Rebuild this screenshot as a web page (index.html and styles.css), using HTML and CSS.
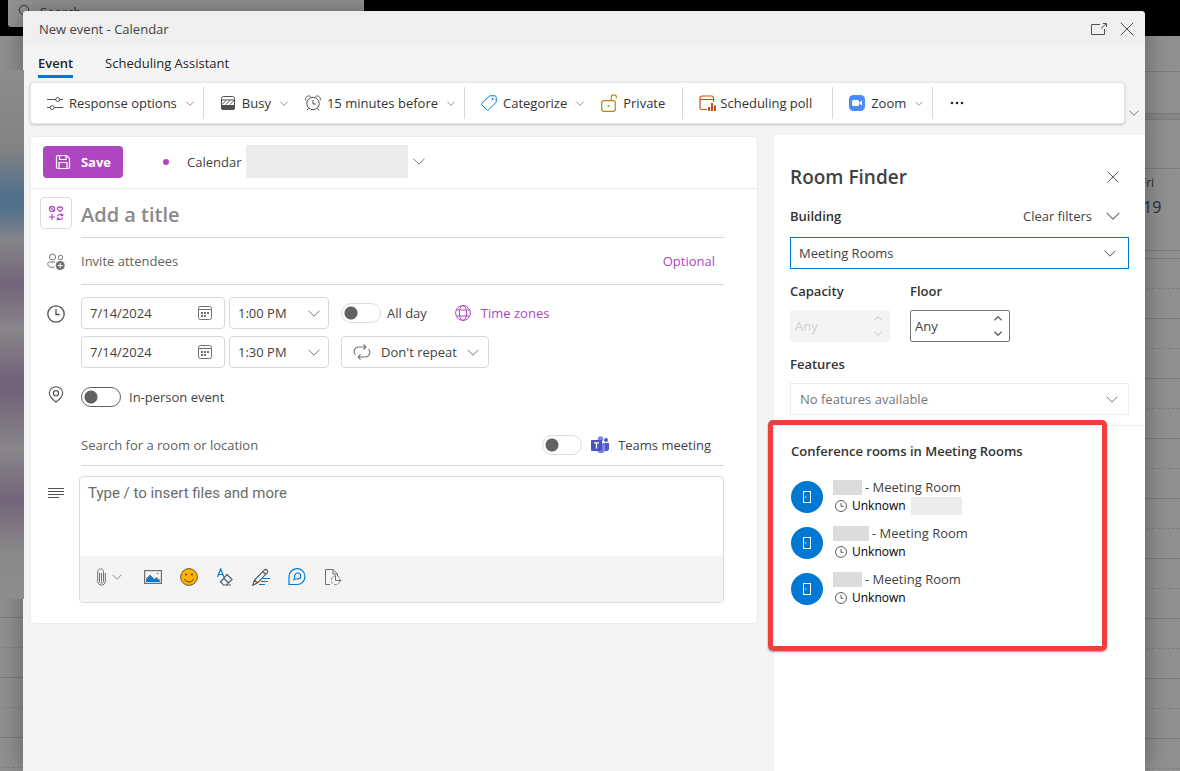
FILE: index.html
```html
<!DOCTYPE html>
<html lang="en">
<head>
    <meta charset="UTF-8">
    <meta name="viewport" content="width=device-width, initial-scale=1.0">
    <title>New event - Calendar</title>
    <link rel="stylesheet" href="styles.css">
</head>
<body>

    <svg class="sprite" aria-hidden="true">
        <symbol id="chevron" viewBox="0 0 12 7"><path d="M.5.7 6 6.2 11.5.7" fill="none" stroke="currentColor"/></symbol>
        <symbol id="close" viewBox="0 0 14 14"><path d="M.7.7l12.6 12.6M13.3.7.7 13.3" fill="none" stroke="currentColor"/></symbol>
        <symbol id="calendar" viewBox="0 0 16 16">
            <rect x="1.5" y="1.5" width="13" height="13" rx="2" fill="none" stroke="currentColor"/>
            <path d="M1.5 4.5h13" stroke="currentColor"/>
            <path d="M4 7h2v2H4zM7 7h2v2H7zM10 7h2v2h-2zM4 10h2v2H4zM7 10h2v2H7z" fill="currentColor"/>
        </symbol>
        <symbol id="clock" viewBox="0 0 18 18">
            <circle cx="9" cy="9" r="8.2" fill="none" stroke="currentColor" stroke-width="1.3"/>
            <path d="M9 4.3V9.500h3.700" fill="none" stroke="currentColor" stroke-width="1.3"/>
        </symbol>
        <symbol id="door" viewBox="0 0 10 14">
            <rect x="1.500" y="1.500" width="7" height="11" fill="none" stroke="currentColor"/>
            <path d="M3 7h1.300" stroke="currentColor"/>
        </symbol>
    </svg>

    <!-- calendar behind the dialog -->
    <div class="backdrop">
        <div class="topbar">
            <div class="search">
                <svg width="14" height="14" viewBox="0 0 14 14"><circle cx="6" cy="6" r="4.700" fill="none" stroke="currentColor"/><path d="M9.500 9.500 13 13" stroke="currentColor"/></svg>
                <span>Search</span>
            </div>
        </div>
        <div class="week">
            <div class="side">
                <div class="sidebar"></div>
                <div class="side-hours"></div>
            </div>
            <div class="day">
                <div class="day-bar"></div>
                <div class="day-tools"></div>
                <div class="day-gap"></div>
                <div class="day-month"></div>
                <div class="day-head">
                    <span>Fri</span>
                    <b>19</b>
                </div>
                <div class="day-allday"></div>
                <div class="day-hours"></div>
            </div>
        </div>
    </div>

    <div class="dialog" role="dialog" aria-labelledby="dialogTitle">
        <header class="titlebar">
            <span id="dialogTitle">New event - Calendar</span>
            <div class="window-buttons">
                <button type="button" aria-label="Open in new window">
                    <svg width="18" height="14" viewBox="0 0 18 14" fill="none" stroke="currentColor"><path d="M10 2.500H1.500v10h13V7M11 6.500l5.500-5M13 1.500h3.500V5"/></svg>
                </button>
                <button type="button" aria-label="Close"><svg width="14" height="14"><use href="#close"/></svg></button>
            </div>
        </header>

        <nav class="tabs">
            <a href="#event" class="active">Event</a>
            <a href="#assistant">Scheduling Assistant</a>
        </nav>

        <div class="ribbon-row">
            <div class="ribbon">
                <div class="ribbon-group">
                    <button type="button">
                        <svg width="16" height="16" viewBox="0 0 16 16" fill="none" stroke="currentColor"><path d="M0 4.500h8.500M13 4.500h3M0 12.500h3M7.500 12.500H16"/><circle cx="10.700" cy="4.500" r="2"/><circle cx="5.200" cy="12.500" r="2"/></svg>
                        Response options
                        <svg class="more" width="8" height="5"><use href="#chevron"/></svg>
                    </button>
                </div>
                <div class="ribbon-group">
                    <button type="button">
                        <svg width="16" height="16" viewBox="0 0 16 16"><rect x="1.500" y="1.500" width="13" height="13" rx="2" fill="none" stroke="currentColor"/><path d="M1 10h14v3a2 2 0 0 1-2 2H3a2 2 0 0 1-2-2zM1 4.500h14v1H1z" fill="currentColor"/><path d="M2 9.500l4-4M6 9.500l4-4M10 9.500l4-4" stroke="currentColor"/></svg>
                        Busy
                        <svg class="more" width="8" height="5"><use href="#chevron"/></svg>
                    </button>
                    <button type="button">
                        <svg width="16" height="16" viewBox="0 0 16 16" fill="none" stroke="currentColor"><circle cx="8" cy="8.500" r="6.200"/><path d="M8 5v4h3M3.500 13.300 2 15.300M12.500 13.300l1.500 2M.8 5.500C-.2 2.500 2.500-.2 5.500 1.500M15.200 5.500C16.200 2.500 13.500-.2 10.500 1.500"/></svg>
                        15 minutes before
                        <svg class="more" width="8" height="5"><use href="#chevron"/></svg>
                    </button>
                </div>
                <div class="ribbon-group">
                    <button type="button">
                        <svg class="blue" width="16" height="16" viewBox="0 0 16 16" fill="none" stroke="currentColor"><path d="M8.800.8h5c.9 0 1.400.5 1.400 1.400v5L7.600 14.800c-.6.6-1.200.6-1.800 0L1 10c-.6-.6-.6-1.200 0-1.800z"/><path d="M10.800 4h1.700" stroke-width="1.700"/></svg>
                        Categorize
                        <svg class="more" width="8" height="5"><use href="#chevron"/></svg>
                    </button>
                    <button type="button" class="plain">
                        <svg class="gold" width="16" height="18" viewBox="0 0 16 18" fill="none" stroke="currentColor" stroke-width="1.200"><rect x=".7" y="6.600" width="13.600" height="10.700" rx="2"/><path d="M10.200 6.600V3.300c0-3.200 5.200-3.200 5.200 0v1"/><circle cx="7.500" cy="12" r="1" fill="currentColor" stroke="none"/></svg>
                        Private
                    </button>
                </div>
                <div class="ribbon-group">
                    <button type="button" class="poll">
                        <svg class="orange" width="17" height="16" viewBox="0 0 17 16"><path d="M8 14.500H3a2 2 0 0 1-2-2V3a2 2 0 0 1 2-2h9.500a2 2 0 0 1 2 2v4M1 4.500h13.500" fill="none" stroke="currentColor" stroke-width="1.200"/><path d="M9 12h2v4H9zM12 8h2v8h-2zM15 10.500h2V16h-2z" fill="currentColor"/></svg>
                        Scheduling poll
                    </button>
                </div>
                <div class="ribbon-group">
                    <button type="button">
                        <svg width="16" height="16" viewBox="0 0 16 16"><rect width="16" height="16" rx="4.500" fill="#4a8cff"/><rect x="3" y="5" width="7" height="6" rx="1.500" fill="#fff"/><path d="M10.500 7.300 13 5.500v5l-2.500-1.800z" fill="#fff"/></svg>
                        Zoom
                        <svg class="more" width="8" height="5"><use href="#chevron"/></svg>
                    </button>
                </div>
                <div class="ribbon-group">
                    <button type="button" aria-label="More options">
                        <svg width="16" height="16" viewBox="0 0 16 16" fill="#242424"><circle cx="3" cy="8" r="1.300"/><circle cx="8" cy="8" r="1.300"/><circle cx="13" cy="8" r="1.300"/></svg>
                    </button>
                </div>
            </div>
            <button type="button" class="ribbon-toggle" aria-label="Ribbon display options"><svg width="10" height="6"><use href="#chevron"/></svg></button>
        </div>

        <div class="content">
            <form class="card">
                <div class="card-head">
                    <button type="button" class="save">
                        <svg width="16" height="16" viewBox="0 0 16 16" fill="none" stroke="currentColor" stroke-width="1.200"><path d="M3 1.500h8.500l3 3V13a1.500 1.500 0 0 1-1.500 1.500H3A1.500 1.500 0 0 1 1.500 13V3A1.500 1.500 0 0 1 3 1.500z"/><path d="M4.500 1.500v4h6.500v-4M4 14.500v-6h8v6"/></svg>
                        Save
                    </button>
                    <span class="dot"></span>
                    <span class="calendar-name">Calendar</span>
                    <span class="redacted account"></span>
                    <svg class="gray" width="12" height="7"><use href="#chevron"/></svg>
                </div>

                <div class="fields">
                    <button type="button" class="category" aria-label="Charm">
                        <svg width="16" height="16" viewBox="0 0 16 16" fill="none" stroke="currentColor" stroke-width="1.200"><circle cx="4" cy="4" r="2.600"/><path d="M2.200 2.200l3.600 3.600M12 6.600 9.600 4.200C8.500 2.600 11 .8 12 2.700c1-1.900 3.500-.1 2.400 1.500zM4 9v6M1 12h6M9.500 11.500c.4-2.200 3.400-2.800 5-1M14.600 8.700v2h-2M14.500 12.500c-.4 2.200-3.400 2.800-5 1M9.400 15.300v-2h2"/></svg>
                    </button>
                    <div class="line title-line">
                        <input type="text" class="title-input" placeholder="Add a title" aria-label="Add a title">
                    </div>

                    <svg class="row-icon people" width="18" height="17" viewBox="0 0 18 17" fill="none" stroke="currentColor"><circle cx="5.500" cy="4" r="3"/><circle cx="13.500" cy="4.500" r="2.200"/><path d="M8 9H2.500C.5 9 .5 11 1 12.200 2 14.200 5 14.700 7.500 14.200"/><circle cx="13.200" cy="12.500" r="4.500" fill="currentColor" stroke="none"/><path d="M13.200 10v5M10.700 12.500h5" stroke="#fff"/></svg>
                    <div class="line attendee-line">
                        <input type="text" placeholder="Invite attendees" aria-label="Invite attendees">
                        <button type="button" class="link">Optional</button>
                    </div>

                    <svg class="row-icon clock-icon" width="18" height="18"><use href="#clock"/></svg>
                    <div class="times">
                        <div class="time-row">
                            <div class="box date">
                                <input type="text" value="7/14/2024" aria-label="Start date">
                                <svg width="16" height="16"><use href="#calendar"/></svg>
                            </div>
                            <div class="pick time">
                                <select aria-label="Start time"><option>1:00 PM</option></select>
                                <svg width="12" height="7"><use href="#chevron"/></svg>
                            </div>
                            <label class="switch light"><input type="checkbox" role="switch">All day</label>
                            <button type="button" class="link zones">
                                <svg width="16" height="16" viewBox="0 0 16 16" fill="none" stroke="currentColor"><circle cx="8" cy="8" r="7.400"/><ellipse cx="8" cy="8" rx="3.700" ry="7.400"/><path d="M1.500 5h13M1.500 11h13"/></svg>
                                Time zones
                            </button>
                        </div>
                        <div class="time-row">
                            <div class="box date">
                                <input type="text" value="7/14/2024" aria-label="End date">
                                <svg width="16" height="16"><use href="#calendar"/></svg>
                            </div>
                            <div class="pick time">
                                <select aria-label="End time"><option>1:30 PM</option></select>
                                <svg width="12" height="7"><use href="#chevron"/></svg>
                            </div>
                            <button type="button" class="box repeat">
                                <svg class="gray" width="18" height="16" viewBox="0 0 18 16" fill="none" stroke="currentColor" stroke-width="1.100"><path d="M2.500 11C-.5 7.500 2 3 5.500 3H13M10.500.5 13 3l-2.500 2.500M15.500 5c3 3.500.5 8-3 8H5M7.500 10.500 5 13l2.500 2.500"/></svg>
                                Don't repeat
                                <svg class="gray" width="12" height="7"><use href="#chevron"/></svg>
                            </button>
                        </div>
                    </div>

                    <svg class="row-icon pin" width="16" height="17" viewBox="0 0 16 17" fill="none" stroke="currentColor" stroke-width="1.100"><path d="M8 16C5 13.800 1.300 10.500 1.300 7a6.700 6.300 0 0 1 13.400 0c0 3.500-3.700 6.800-6.700 9z"/><circle cx="8" cy="7.200" r="2.600"/></svg>
                    <div class="place">
                        <label class="switch"><input type="checkbox" role="switch">In-person event</label>
                    </div>

                    <div class="line room-line">
                        <input type="text" placeholder="Search for a room or location" aria-label="Search for a room or location">
                        <label class="switch light teams">
                            <input type="checkbox" role="switch">
                            <svg width="18" height="18" viewBox="0 0 18 18"><circle cx="9.500" cy="3" r="2.700" fill="#7b83eb"/><circle cx="15" cy="4" r="2" fill="#5059c9"/><path d="M12.500 7H18v5.500c0 3.500-5.500 3.500-5.500 0z" fill="#5059c9"/><path d="M6 7h8v6.500c0 5-8 5-8 0z" fill="#7b83eb"/><rect y="4" width="11" height="11" rx="1" fill="#4b53bc"/><path d="M3 6.800h5M5.500 6.800v5.700" stroke="#fff" stroke-width="1.300"/></svg>
                            Teams meeting
                        </label>
                    </div>

                    <svg class="row-icon body-icon" width="16" height="12" viewBox="0 0 16 12" stroke="currentColor"><path d="M0 1.500h16M0 4.500h16M0 7.500h16M0 10.500h11"/></svg>
                    <div class="editor">
                        <textarea placeholder="Type / to insert files and more" aria-label="Event description"></textarea>
                        <div class="editor-tools">
                            <button type="button" aria-label="Attach file" class="attach">
                                <svg width="9" height="18" viewBox="0 0 9 18" fill="none" stroke="currentColor"><path d="M2.500 5v8.500c0 2 4 2 4 0V3.500C6.500 0 .7 0 .7 3.500v10c0 4.700 7.600 4.700 7.600 0V5M4.500 5v8.500"/></svg>
                                <svg width="10" height="6"><use href="#chevron"/></svg>
                            </button>
                            <button type="button" aria-label="Insert picture">
                                <svg width="18" height="14" viewBox="0 0 18 14"><path d="M2 12V10l4-4.500 4 4 2-2 4 3.500v1z" fill="#0078d4"/><path d="M2 9l4-4 4.500 4.500L13 7.500l3 3" fill="none" stroke="currentColor"/><rect x=".6" y=".6" width="16.800" height="12.800" fill="none" stroke="currentColor" stroke-width="1.200"/><circle cx="13.500" cy="3.500" r=".8" fill="currentColor"/></svg>
                            </button>
                            <button type="button" aria-label="Emoji">
                                <svg width="18" height="18" viewBox="0 0 18 18"><circle cx="9" cy="9" r="8.400" fill="#ffb300" stroke="#6b5a2a"/><circle cx="6" cy="6.500" r="1" fill="#4a3b14"/><circle cx="12" cy="6.500" r="1" fill="#4a3b14"/><path d="M4.500 11c1.500 4 7.500 4 9 0" fill="none" stroke="#4a3b14"/></svg>
                            </button>
                            <button type="button" aria-label="Clear formatting">
                                <svg width="18" height="18" viewBox="0 0 18 18" fill="none"><path d="M1.500 9 4.700 1l3.200 8M2.700 6.500h4" stroke="#0078d4" stroke-width="1.200"/><path d="M11 6.500 16 11.500 10.500 17H7.500L4.500 14zM7.500 10l5 5M8 17h7" stroke="#50606e" stroke-width="1.200"/></svg>
                            </button>
                            <button type="button" aria-label="Draw">
                                <svg width="18" height="18" viewBox="0 0 18 18" fill="none"><path d="M11 10.500h7M9 13.500h7M7 16.500h6" stroke="#0078d4"/><path d="M.8 17.200l1.700-5.200L12.500 1.900c1.500-1.500 4.300 1 2.800 2.700L5.700 14.800zM2.500 12l3.200 2.800M10.800 3.600l2.900 2.900" stroke="#505050" stroke-width="1.100"/></svg>
                            </button>
                            <button type="button" aria-label="Loop component">
                                <svg width="18" height="18" viewBox="0 0 18 18" fill="none" stroke="#0078d4" stroke-width="1.200"><path d="M1 16.500V9a8 7.900 0 1 1 8 7.500zM5.500 12.500c1-1 1.200-2 1.200-4.500a3 3 0 1 1 3 3H7"/></svg>
                            </button>
                            <button type="button" aria-label="Insert template">
                                <svg width="18" height="18" viewBox="0 0 18 18" fill="none" stroke="currentColor"><path d="M6 16.500H1.500v-15H9L13.500 6v2M9 1.500V6h4.500"/><path d="M15.500 9.500a4.500 4.500 0 1 0 0 5.500" stroke-dasharray="2.500 1.500"/><path d="M11.500 8v4.500H17M15 10.500l2 2-2 2"/></svg>
                            </button>
                        </div>
                    </div>
                </div>
            </form>

            <aside class="finder">
                <div class="filters">
                    <div class="finder-head">
                        <h2>Room Finder</h2>
                        <button type="button" aria-label="Close Room Finder"><svg width="12" height="12"><use href="#close"/></svg></button>
                    </div>
                    <div class="finder-row">
                        <label for="building">Building</label>
                        <button type="button" class="clear">Clear filters <svg width="14" height="8"><use href="#chevron"/></svg></button>
                    </div>
                    <div class="pick building">
                        <select id="building"><option>Meeting Rooms</option></select>
                        <svg width="12" height="7"><use href="#chevron"/></svg>
                    </div>
                    <div class="steppers">
                        <div class="stepper disabled">
                            <label for="capacity">Capacity</label>
                            <div class="stepper-box">
                                <input type="text" id="capacity" value="Any" disabled>
                                <span class="arrows">
                                    <svg class="up" width="8" height="5"><use href="#chevron"/></svg>
                                    <svg width="8" height="5"><use href="#chevron"/></svg>
                                </span>
                            </div>
                        </div>
                        <div class="stepper">
                            <label for="floor">Floor</label>
                            <div class="stepper-box">
                                <input type="text" id="floor" value="Any">
                                <span class="arrows">
                                    <svg class="up" width="8" height="5"><use href="#chevron"/></svg>
                                    <svg width="8" height="5"><use href="#chevron"/></svg>
                                </span>
                            </div>
                        </div>
                    </div>
                    <label for="features" class="features-label">Features</label>
                    <div class="pick features">
                        <select id="features"><option>No features available</option></select>
                        <svg width="12" height="7"><use href="#chevron"/></svg>
                    </div>
                </div>

                <section class="rooms">
                    <h3>Conference rooms in Meeting Rooms</h3>
                    <ul>
                        <li>
                            <span class="avatar"><svg width="10" height="14"><use href="#door"/></svg></span>
                            <div>
                                <div class="room-name"><span class="redacted name"></span>- Meeting Room</div>
                                <div class="room-state"><svg width="12" height="12"><use href="#clock"/></svg>Unknown <span class="redacted extra"></span></div>
                            </div>
                        </li>
                        <li>
                            <span class="avatar"><svg width="10" height="14"><use href="#door"/></svg></span>
                            <div>
                                <div class="room-name"><span class="redacted name wide"></span>- Meeting Room</div>
                                <div class="room-state"><svg width="12" height="12"><use href="#clock"/></svg>Unknown</div>
                            </div>
                        </li>
                        <li>
                            <span class="avatar"><svg width="10" height="14"><use href="#door"/></svg></span>
                            <div>
                                <div class="room-name"><span class="redacted name"></span>- Meeting Room</div>
                                <div class="room-state"><svg width="12" height="12"><use href="#clock"/></svg>Unknown</div>
                            </div>
                        </li>
                    </ul>
                </section>
            </aside>
        </div>
    </div>

</body>
</html>
```
FILE: styles.css
```css
* {
    box-sizing: border-box;
}

body {
    margin: 0;
    min-height: 100vh;
    display: flex;
    position: relative;
    overflow: hidden;
    background: #909090;
    color: #424242;
    font-family: "Open Sans", "Noto Sans", sans-serif;
    font-size: 13px;
    line-height: 20px;
}

svg {
    display: block;
    flex: none;
}

.sprite {
    position: absolute;
    width: 0;
    height: 0;
}

button, input, select, textarea {
    font: inherit;
    color: inherit;
    background: none;
    border: none;
    margin: 0;
    padding: 0;
    min-width: 0;
}

button {
    display: flex;
    align-items: center;
    cursor: pointer;
}

input, textarea, select {
    outline: none;
}

.redacted {
    background: #ececec;
    flex: none;
}

/* Backdrop */
.backdrop {
    position: absolute;
    inset: 0;
    display: flex;
    flex-direction: column;
}

.topbar {
    height: 36px;
    padding-left: 8px;
    background: #000;
}

.search {
    width: 356px;
    height: 27px;
    padding: 2px 10px 0;
    display: flex;
    gap: 8px;
    background: #939393;
    border-radius: 0 0 3px 3px;
    color: #333;
}

.search svg {
    margin-top: 2px;
}

.week {
    flex: 1;
    display: flex;
    justify-content: space-between;
}

.side {
    width: 24px;
    padding-top: 34px;
    display: flex;
    flex-direction: column;
}

/* blurred strip, stays above the dialog shadow */
.sidebar {
    position: relative;
    z-index: 1;
    height: 529px;
    background: linear-gradient(#8c8c8c 0, #828282 80px, #50708c 125px, #50708c 138px, #858488 170px, #74647a 215px, #88868a 260px, #74647a 305px, #74647a 325px, #88868a 380px, #74647a 430px, #8a8a8a 485px, #8c8c8c);
}

.side-hours {
    flex: 1;
    margin-top: -41px;
}

.side-hours,
.day-hours {
    background:
        repeating-linear-gradient(transparent 0 59px, #7b7b7b 59px 60px),
        repeating-linear-gradient(90deg, #909090 0 2px, transparent 2px 5px),
        repeating-linear-gradient(transparent 0 29px, #7f7f7f 29px 30px, transparent 30px 60px);
}

.day {
    width: 40px;
    display: flex;
    flex-direction: column;
    background: #909090;
    color: #2b2b2b;
}

.day > div {
    border-bottom: 1px solid #7b7b7b;
}

.day-bar {
    height: 36px;
}

.day-tools {
    height: 42px;
}

.day-gap {
    height: 6px;
    background: #868686;
}

.day-month {
    height: 49px;
}

.day-head {
    height: 82px;
    padding-top: 4px;
    display: flex;
    flex-direction: column;
    font-size: 12px;
}

.day-head b {
    padding: 4px 0 0 3px;
    font-size: 16px;
    font-weight: 400;
}

.day-allday {
    height: 8px;
}

.day .day-hours {
    flex: 1;
    border: none;
}

/* Dialog */
.dialog {
    position: relative;
    flex: 1;
    margin: 11px 35px 0 23px;
    display: flex;
    flex-direction: column;
    background: #f4f4f4;
    border-radius: 4px 4px 0 0;
    box-shadow: 0 0 24px rgba(0, 0, 0, 0.35);
}

.titlebar {
    height: 36px;
    padding: 0 11px 0 16px;
    display: flex;
    justify-content: space-between;
    align-items: center;
    background: #efefef;
    border-radius: 4px 4px 0 0;
}

.window-buttons {
    display: flex;
    gap: 12px;
    color: #505050;
}

.tabs {
    height: 35px;
    padding: 6px 15px 0;
    display: flex;
    align-items: flex-start;
    gap: 32px;
}

.tabs a {
    color: #242424;
    text-decoration: none;
    padding-bottom: 2px;
}

.tabs .active {
    font-weight: 600;
    border-bottom: 3px solid #0078d4;
}

.ribbon-row {
    display: flex;
    align-items: flex-end;
    padding: 0 5px 0 7px;
    gap: 3px;
}

.ribbon {
    flex: 1;
    height: 42px;
    display: flex;
    align-items: center;
    background: #fff;
    border: 1px solid #e6e6e6;
    border-radius: 4px;
    box-shadow: 0 1px 3px rgba(0, 0, 0, 0.2);
    color: #333;
}

.ribbon-group {
    height: 32px;
    padding: 0 9px 0 16px;
    display: flex;
    gap: 17px;
    border-right: 1px solid #d8d8d8;
}

.ribbon-group:last-child {
    border: none;
}

.ribbon button {
    gap: 6px;
    white-space: nowrap;
}

.ribbon svg {
    color: #505050;
}

.ribbon .more {
    margin-left: 3px;
    color: #606060;
}

.ribbon .plain {
    padding-right: 8px;
}

.ribbon .poll {
    gap: 4px;
    padding-right: 11px;
}

.ribbon .blue {
    color: #0078d4;
}

.ribbon .gold {
    color: #ae8c16;
}

.ribbon .orange {
    color: #ca5010;
}

.ribbon-toggle {
    height: 22px;
    padding: 0 1px;
    color: #606060;
}

.content {
    flex: 1;
    display: flex;
    align-items: stretch;
    gap: 16px;
    padding: 11px 0 0 7px;
}

/* Event form */
.card {
    flex: 1;
    align-self: flex-start;
    min-width: 0;
    margin-top: 1px;
    background: #fff;
    border: 1px solid #ededed;
    border-radius: 4px;
}

.card-head {
    height: 52px;
    padding: 0 12px 2px;
    display: flex;
    align-items: center;
    border-bottom: 1px solid #ededed;
}

.save {
    width: 80px;
    height: 32px;
    justify-content: center;
    gap: 10px;
    background: #af46c1;
    border-radius: 4px;
    color: #fff;
    font-weight: 700;
}

.dot {
    width: 6px;
    height: 6px;
    margin: 0 18px 0 40px;
    border-radius: 50%;
    background: #af46c1;
}

.calendar-name {
    width: 59px;
}

.account {
    width: 162px;
    height: 33px;
    margin-right: 5px;
}

.gray {
    color: #767676;
}

.fields {
    padding: 8px 33px 20px 9px;
    display: grid;
    grid-template-columns: 32px 1fr;
    column-gap: 9px;
}

.row-icon {
    justify-self: center;
    color: #505050;
}

.category {
    width: 32px;
    height: 32px;
    justify-content: center;
    border: 1px solid #dcdcdc;
    border-radius: 4px;
    color: #af46c1;
}

.line {
    display: flex;
    align-items: center;
    border-bottom: 1px solid #d8d8d8;
}

.line input[type="text"] {
    flex: 1;
}

.line input::placeholder {
    color: #616161;
    opacity: 1;
}

.title-line {
    height: 41px;
    padding-bottom: 4px;
}

.title-line .title-input {
    font-size: 20px;
    line-height: 28px;
    font-weight: 600;
}

.title-line .title-input::placeholder {
    color: #8a8a8a;
}

.people {
    align-self: center;
    color: #707070;
}

.attendee-line {
    height: 47px;
    padding-right: 9px;
}

.link {
    color: #af46c1;
}

.times {
    padding-top: 12px;
    display: flex;
    flex-direction: column;
    gap: 7px;
}

.clock-icon {
    margin-top: 20px;
}

.pin {
    margin-top: 18px;
}

.time-row {
    display: flex;
    align-items: center;
}

.box {
    height: 32px;
    display: flex;
    align-items: center;
    border: 1px solid #d8d8d8;
    border-radius: 4px;
}

.date {
    width: 144px;
    margin-right: 4px;
    padding: 0 11px 0 8px;
}

.date input {
    flex: 1;
}

.date svg {
    color: #707070;
}

/* select with its arrow stacked in the same cell */
.pick {
    display: grid;
    align-items: center;
}

.pick select,
.pick svg {
    grid-area: 1 / 1;
}

.pick select {
    appearance: none;
    height: 32px;
    padding: 0 24px 0 8px;
    border: 1px solid #d8d8d8;
    border-radius: 4px;
    color: #424242;
}

.pick svg {
    justify-self: end;
    margin-right: 9px;
    color: #767676;
    pointer-events: none;
}

.time {
    width: 100px;
    margin-right: 12px;
}

.switch {
    display: flex;
    align-items: center;
    gap: 8px;
}

.switch.light {
    gap: 6px;
}

.switch input {
    appearance: none;
    width: 40px;
    height: 20px;
    flex: none;
    border: 1px solid #616161;
    border-radius: 10px;
    background: radial-gradient(circle at 9px 9px, #616161 6px, transparent 7px);
}

.switch.light input {
    border-color: #dcdcdc;
}

.zones {
    margin-left: 28px;
    gap: 10px;
}

.repeat {
    width: 148px;
    padding: 0 9px 0 11px;
    justify-content: space-between;
}

.place {
    padding-top: 19px;
}

.room-line {
    grid-column: 2;
    height: 42px;
    margin-top: 17px;
    padding-right: 13px;
}

.room-line .teams {
    gap: 9px;
}

.body-icon {
    margin-top: 21px;
}

.editor {
    margin: 10px 0 0 -2px;
    border: 1px solid #dcdcdc;
    border-radius: 4px;
    overflow: hidden;
}

.editor textarea {
    display: block;
    width: 100%;
    height: 79px;
    padding: 6px 8px;
    resize: none;
    font-family: Roboto, sans-serif;
    font-size: 15px;
}

.editor textarea::placeholder {
    color: #6b6b6b;
    opacity: 1;
}

.editor-tools {
    height: 46px;
    padding: 0 17px 4px;
    display: flex;
    align-items: center;
    gap: 18px;
    background: #f4f4f4;
    color: #707070;
}

.editor-tools .attach {
    gap: 6px;
    margin-right: 4px;
}

/* Room finder */
.finder {
    width: 371px;
    background: #fff;
}

.filters {
    padding: 29px 16px 10px;
    border-bottom: 1px solid #ededed;
}

.finder label,
.finder h3 {
    font-weight: 600;
    color: #333;
}

.finder-head {
    display: flex;
    justify-content: space-between;
    align-items: center;
    padding-right: 10px;
    height: 26px;
}

.finder-head h2 {
    margin: 0;
    font-size: 19px;
    font-weight: 600;
}

.finder-row {
    display: flex;
    justify-content: space-between;
    padding: 16px 9px 11px 0;
}

.clear {
    gap: 14px;
}

.clear svg {
    color: #707070;
}

.pick.building select,
.pick.features select {
    border-radius: 0;
}

.pick.building select {
    border-color: #0078d4;
}

.building svg {
    margin-right: 13px;
    color: #505050;
}

.pick.features select {
    padding-left: 9px;
    border-color: #ededed;
    color: #767676;
}

.features svg {
    margin-right: 11px;
}

.steppers {
    display: flex;
    gap: 20px;
    padding: 12px 0;
}

.stepper {
    width: 100px;
    display: flex;
    flex-direction: column;
    gap: 9px;
}

.stepper-box {
    height: 32px;
    padding: 0 7px 0 4px;
    display: flex;
    align-items: center;
    border: 1px solid #767676;
    border-radius: 2px;
}

.stepper-box input {
    flex: 1;
}

.arrows {
    display: flex;
    flex-direction: column;
    gap: 10px;
    color: #616161;
}

.arrows use {
    stroke-width: 2;
}

.arrows .up {
    transform: rotate(180deg);
}

.disabled .stepper-box {
    border-color: #f4f4f4;
    background: #f4f4f4;
    color: #d0d0d0;
}

.disabled .arrows {
    color: #d8d8d8;
}

.features-label {
    display: block;
    margin-bottom: 9px;
}

.rooms {
    position: relative;
    height: 225px;
    padding: 15px 17px;
}

/* red highlight drawn over the room list */
.rooms::after {
    content: "";
    position: absolute;
    inset: -6px 38px 0 -6px;
    border: 5px solid #f03e3e;
    border-radius: 5px;
    box-shadow: 0 1px 2px rgba(0, 0, 0, 0.4);
    pointer-events: none;
}

.rooms h3 {
    margin: 0 0 16px;
    font-size: 13px;
}

.rooms ul {
    list-style: none;
    margin: 0;
    padding: 0;
}

.rooms li {
    height: 46px;
    display: flex;
    gap: 10px;
}

.avatar {
    width: 32px;
    height: 32px;
    margin-top: 4px;
    display: flex;
    align-items: center;
    justify-content: center;
    border-radius: 50%;
    background: #0078d4;
    color: #fff;
}

.room-name {
    display: flex;
    align-items: center;
    gap: 3px;
}

.room-name .name {
    width: 29px;
    height: 15px;
    background: #dcdcdc;
}

.room-name .wide {
    width: 36px;
}

.room-state {
    display: flex;
    align-items: center;
    gap: 5px;
    height: 18px;
    padding-left: 2px;
    font-size: 12px;
    color: #000;
}

.room-state svg {
    color: #424242;
}

.room-state .extra {
    width: 51px;
    height: 18px;
}
```
